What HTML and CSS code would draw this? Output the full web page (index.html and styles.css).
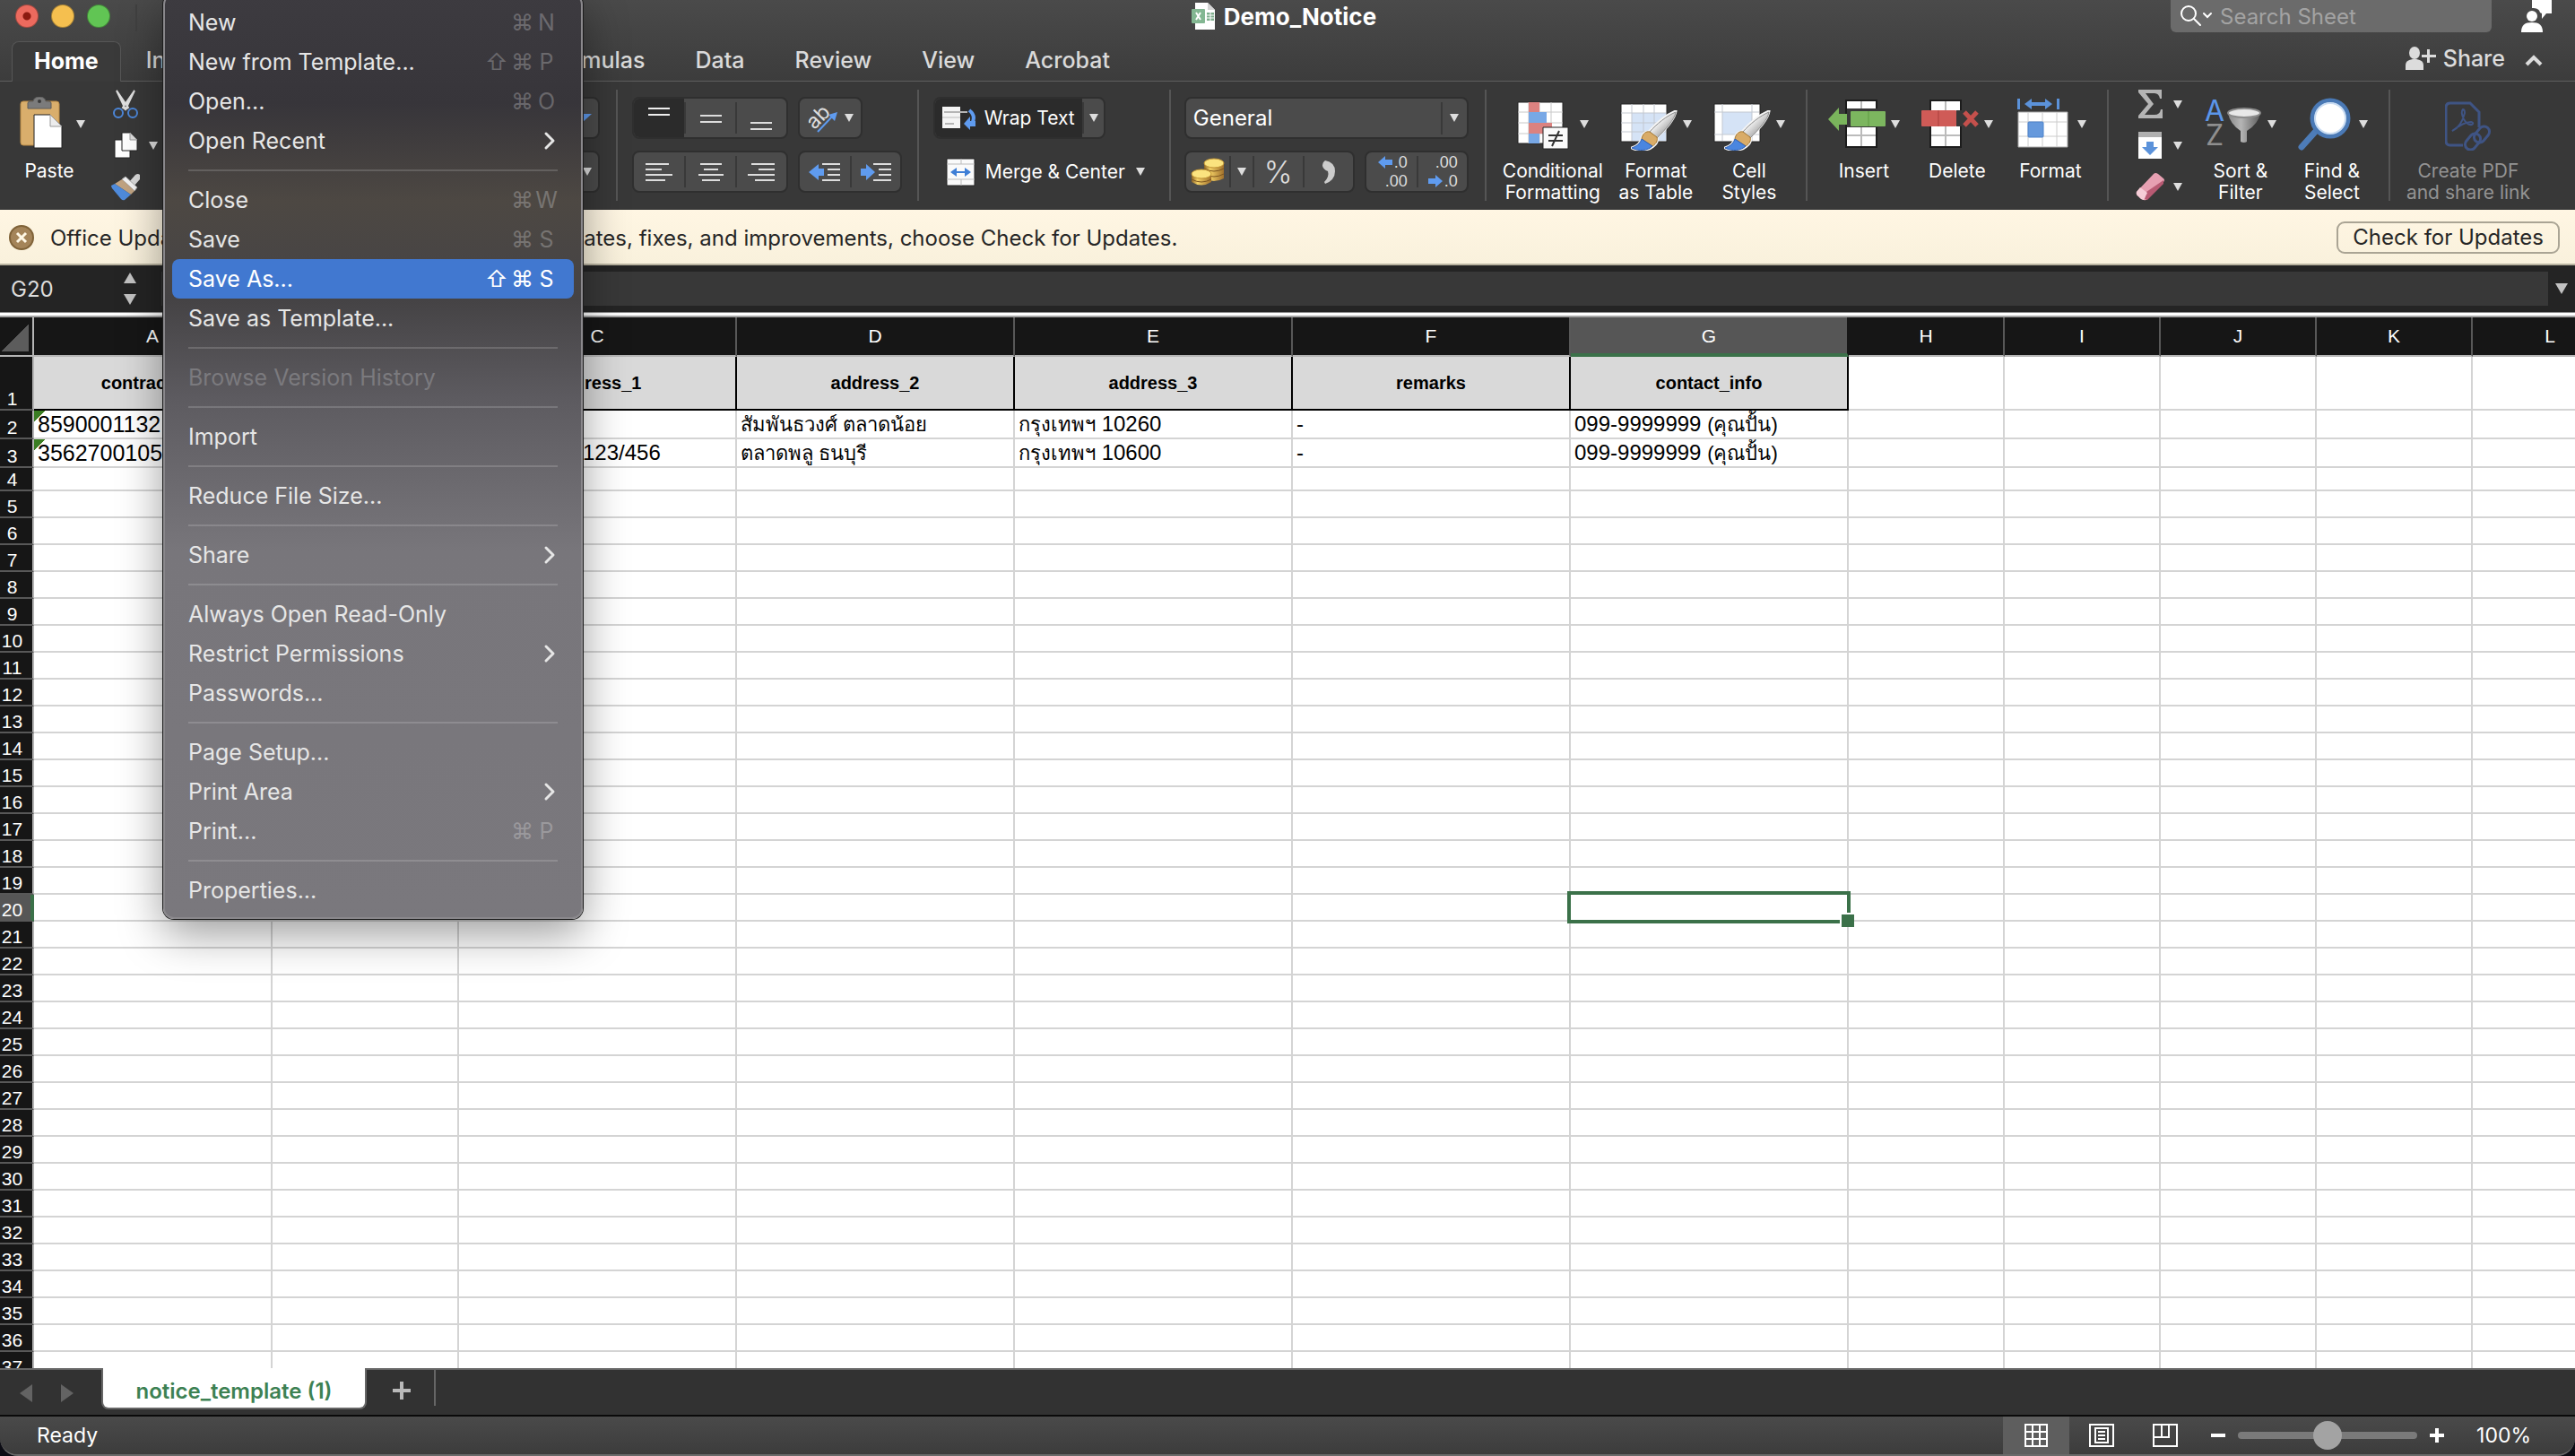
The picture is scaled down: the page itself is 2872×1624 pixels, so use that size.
FILE: index.html
```
<!DOCTYPE html>
<html lang="en">
<head>
    <meta charset="UTF-8">
    <meta name="viewport" content="width=device-width, initial-scale=1.0">
    <title>Demo_Notice</title>
    <link rel="stylesheet" href="styles.css">
</head>
<body>

    <!-- shared icon shapes -->
    <svg class="defs" aria-hidden="true">
        <defs>
            <linearGradient id="steel" x1="0" y1="0" x2="1" y2="1">
                <stop offset="0.3" stop-color="#ffffff"/>
                <stop offset="0.7" stop-color="#a8a8a8"/>
            </linearGradient>
            <linearGradient id="gold" x1="0" y1="0" x2="1" y2="0">
                <stop offset="0" stop-color="#8a6327"/>
                <stop offset="0.3" stop-color="#f3d065"/>
                <stop offset="1" stop-color="#a0702c"/>
            </linearGradient>
            <linearGradient id="funnel" x1="0" y1="0" x2="1" y2="0">
                <stop offset="0" stop-color="#8a8a8a"/>
                <stop offset="0.4" stop-color="#b5b5b5"/>
                <stop offset="1" stop-color="#5e5e5e"/>
            </linearGradient>
            <symbol id="brush" viewBox="0 0 52 46">
                <path d="M50 1C40 5 28 15 20 24c-4 0-7 3-8 7-1 6-5 9-11 11 8 4 18 3 24-2 4-3 5-7 4-10C38 22 49 9 50 1z" fill="#fff" stroke="#f4f4f4" stroke-width="3"/>
                <path d="M50 2C40 6 28 16 21 24l8 7C38 22 49 10 50 2z" fill="url(#steel)" stroke="#8d8d8d"/>
                <path d="M21 24c-4-1-8 2-9 8l12 8c5-3 6-7 5-10z" fill="#d9ac68" stroke="#a67a35"/>
                <path d="M12 32c-2 6-6 8-11 10 8 4 18 3 23-2z" fill="#4a86e0" stroke="#2c5fb5"/>
            </symbol>
            <symbol id="chevron" viewBox="0 0 14 22">
                <path d="M3 3l8 8-8 8" fill="none" stroke="currentColor" stroke-width="3" stroke-linecap="round" stroke-linejoin="round"/>
            </symbol>
        </defs>
    </svg>

    <div class="window">

        <header class="top">
            <div class="titlebar">
                <div class="lights">
                    <button class="light red" aria-label="Close window"></button>
                    <button class="light yellow" aria-label="Minimize"></button>
                    <button class="light green" aria-label="Zoom"></button>
                    <span class="lights-line"></span>
                </div>
                <h1 class="title">
                    <svg width="26" height="30" viewBox="0 0 26 30">
                        <path d="M4 0h14l8 8v22H4z" fill="#fff"/>
                        <path d="M18 0v8h8z" fill="#d5d5d5"/>
                        <path d="M17 11h8v9h-8z" fill="#7fae8d"/>
                        <path d="M17 14h8M17 17h8M21 11v9" stroke="#fff"/>
                        <rect y="7" width="15" height="16" rx="1" fill="#83b792"/>
                        <path d="M5 11l5 8M10 11l-5 8" stroke="#fff" stroke-width="2"/>
                    </svg>
                    Demo_Notice
                </h1>
                <div class="title-right">
                    <label class="search">
                        <svg width="36" height="26" viewBox="0 0 36 26" fill="none" stroke="#fff" stroke-width="2" stroke-linecap="round">
                            <circle cx="10" cy="10" r="8"/>
                            <path d="M16 16l7 7M27 10l4 4 4-4"/>
                        </svg>
                        <input type="text" placeholder="Search Sheet" aria-label="Search Sheet">
                    </label>
                    <svg class="profile" width="36" height="36" viewBox="0 0 36 36" fill="#fff">
                        <ellipse cx="13" cy="18" rx="6" ry="6"/>
                        <path d="M1 36c0-8 4-11 12-11s12 3 12 11z"/>
                        <path d="M13 0h22v15h-6l-5 6v-6l-2-1c-1-4-4-5-9-5z"/>
                    </svg>
                </div>
            </div>
            <div class="tabrow">
                <nav class="tabs">
                    <a href="#" class="tab active">Home</a>
                    <a href="#" class="tab">Insert</a>
                    <a href="#" class="tab">Draw</a>
                    <a href="#" class="tab">Page Layout</a>
                    <a href="#" class="tab">Formulas</a>
                    <a href="#" class="tab">Data</a>
                    <a href="#" class="tab">Review</a>
                    <a href="#" class="tab">View</a>
                    <a href="#" class="tab">Acrobat</a>
                </nav>
                <div class="share">
                    <button class="share-btn">
                        <svg width="34" height="26" viewBox="0 0 34 26" fill="#dcdcdc">
                            <ellipse cx="10" cy="7" rx="6" ry="7"/>
                            <path d="M0 26v-5c0-5 4-7 10-7s10 2 10 7v5z"/>
                            <path d="M24 3h3v6h7v3h-7v6h-3v-6h-6V9h6z"/>
                        </svg>
                        Share
                    </button>
                    <button class="collapse" aria-label="Collapse ribbon">
                        <svg width="20" height="14" viewBox="0 0 20 14"><path d="M2 12l8-8 8 8" fill="none" stroke="#dcdcdc" stroke-width="4"/></svg>
                    </button>
                </div>
            </div>
        </header>

        <section class="ribbon">
            <div class="group clipboard">
                <button class="tool">
                    <span class="pic">
                        <svg width="64" height="60" viewBox="0 0 64 60">
                            <rect x="8" y="5" width="43" height="49" rx="3" fill="#d9ae6c" stroke="#b98a45"/>
                            <path d="M16 13V7q0-2 3-2h3q1-5 7-5t7 5h3q3 0 3 2v6z" fill="#7b7b7b" stroke="#5c5c5c"/>
                            <circle cx="29" cy="5" r="2" fill="#3a3a3a"/>
                            <path d="M23 20h18l13 13v24H23z" fill="#fff" stroke="#222"/>
                            <path d="M41 20v13h13z" fill="#ececec" stroke="#999"/>
                        </svg>
                        <i class="arrow"></i>
                    </span>
                    <span class="label">Paste</span>
                </button>
                <div class="stack">
                    <button aria-label="Cut">
                        <svg width="32" height="32" viewBox="0 0 32 32">
                            <path d="M6 1l13 19-3 2zM26 1L13 20l3 2z" fill="#eee" stroke="#ddd" stroke-width="2"/>
                            <ellipse cx="8" cy="26" rx="5" ry="5" fill="none" stroke="#4c86d8" stroke-width="2"/>
                            <ellipse cx="24" cy="26" rx="5" ry="5" fill="none" stroke="#4c86d8" stroke-width="2"/>
                        </svg>
                    </button>
                    <button aria-label="Copy">
                        <svg width="32" height="32" viewBox="0 0 32 32" fill="#fff" stroke="#222">
                            <path d="M4 10h17v20H4z"/>
                            <path d="M12 2h9l8 8v12H12z"/>
                            <path d="M21 2v8h8z" fill="#ddd" stroke="#999"/>
                        </svg>
                        <i class="arrow"></i>
                    </button>
                    <button aria-label="Format painter">
                        <svg width="32" height="32" viewBox="0 0 32 32">
                            <path d="M20 11l7-8q3-2 5 0t0 5l-7 8z" fill="#d9d9d9"/>
                            <path d="M12 8l4-3 13 12-3 4z" fill="#f3f3f3" stroke="#aaa"/>
                            <path d="M4 13l8-5 14 13-4 4z" fill="#c0a382"/>
                            <path d="M0 15l4-2 18 12-7 6q-2 1-4-1L1 18q-1-2-1-3z" fill="#4f8bdc"/>
                        </svg>
                    </button>
                </div>
            </div>
            <div class="group rows font">
                <div class="row">
                    <div class="seg"><button aria-label="Clear formatting"><svg width="18" height="10" viewBox="0 0 18 10"><path d="M0 0h18L7 10z" fill="#5f9bef"/></svg></button></div>
                </div>
                <div class="row">
                    <div class="seg"><button aria-label="Font color"><i class="arrow"></i></button></div>
                </div>
            </div>
            <span class="divider"></span>
            <div class="group rows align">
                <div class="row">
                    <div class="seg three">
                        <button class="on" aria-label="Top align"><svg width="28" height="26" viewBox="0 0 28 26"><path d="M2 2h24M2 9h24" stroke="#eee" stroke-width="2"/></svg></button>
                        <button aria-label="Middle align"><svg width="28" height="26" viewBox="0 0 28 26"><path d="M2 10h24M2 17h24" stroke="#ddd" stroke-width="2"/></svg></button>
                        <button aria-label="Bottom align"><svg width="28" height="26" viewBox="0 0 28 26"><path d="M2 18h24M2 25h24" stroke="#ddd" stroke-width="2"/></svg></button>
                    </div>
                    <div class="seg">
                        <button class="orient" aria-label="Orientation">
                            <svg width="36" height="36" viewBox="0 0 36 36">
                                <text x="2" y="24" transform="rotate(-45 14 20)" class="ab">ab</text>
                                <path d="M12 33L28 16" stroke="#5f9bef" stroke-width="2"/>
                                <path d="M34 11l-10 3 7 7z" fill="#5f9bef"/>
                            </svg>
                            <i class="arrow"></i>
                        </button>
                    </div>
                </div>
                <div class="row">
                    <div class="seg three">
                        <button aria-label="Align left"><svg width="32" height="24" viewBox="0 0 32 24"><path d="M1 3h26M1 9h18M1 15h30M1 21h22" stroke="#ddd" stroke-width="2"/></svg></button>
                        <button aria-label="Center"><svg width="32" height="24" viewBox="0 0 32 24"><path d="M4 3h24M8 9h16M2 15h28M6 21h20" stroke="#ddd" stroke-width="2"/></svg></button>
                        <button aria-label="Align right"><svg width="32" height="24" viewBox="0 0 32 24"><path d="M5 3h26M13 9h18M1 15h30M9 21h22" stroke="#ddd" stroke-width="2"/></svg></button>
                    </div>
                    <div class="seg two">
                        <button aria-label="Decrease indent"><svg width="36" height="24" viewBox="0 0 36 24"><path d="M0 12L11 3v5h6v8h-6v5z" fill="#5f9bef"/><path d="M15 3h20M21 9h14M21 15h14M15 21h20" stroke="#ddd" stroke-width="2"/></svg></button>
                        <button aria-label="Increase indent"><svg width="36" height="24" viewBox="0 0 36 24"><path d="M17 12L7 3v5H1v8h6v5z" fill="#5f9bef"/><path d="M15 3h20M21 9h14M21 15h14M15 21h20" stroke="#ddd" stroke-width="2"/></svg></button>
                    </div>
                </div>
            </div>
            <span class="divider"></span>
            <div class="group rows wrap">
                <div class="row">
                    <div class="seg">
                        <button class="on labelled">
                            <svg width="40" height="28" viewBox="0 0 40 28">
                                <path d="M0 1h20v24H0z" fill="#f4f4f4"/>
                                <path d="M2 7h26M3 20h10" stroke="#b5b5b5" stroke-width="2"/>
                                <path d="M0 13h20" stroke="#bbb"/>
                                <path d="M30 5q8 6 3 15" fill="none" stroke="#5f9bef" stroke-width="4"/>
                                <path d="M24 20l7-8v5h6v6h-6v4z" fill="#5f9bef"/>
                            </svg>
                            Wrap Text
                        </button>
                        <button class="narrow" aria-label="Wrap options"><i class="arrow"></i></button>
                    </div>
                </div>
                <div class="row">
                    <button class="plain labelled">
                        <svg width="40" height="32" viewBox="0 0 40 32">
                            <path d="M4 1h31v30H4z" fill="#fafafa" stroke="#222"/>
                            <path d="M4 7h31M4 24h31M20 1v6M20 24v7" stroke="#bbb"/>
                            <path d="M8 16l7-5v4h9v-4l7 5-7 5v-4h-9v4z" fill="#3f7fd6"/>
                        </svg>
                        Merge &amp; Center
                        <i class="arrow"></i>
                    </button>
                </div>
            </div>
            <span class="divider"></span>
            <div class="group rows number">
                <div class="row">
                    <div class="seg format">
                        <select aria-label="Number format"><option>General</option></select>
                        <i class="arrow"></i>
                    </div>
                </div>
                <div class="row">
                    <div class="seg">
                        <button class="coins" aria-label="Accounting format">
                            <svg width="40" height="34" viewBox="0 0 40 34">
                                <path d="M16 7v17q11 6 22 0V7z" fill="url(#gold)"/>
                                <path d="M16 13q11 6 22 0M16 19q11 6 22 0" fill="none" stroke="#7b5520"/>
                                <ellipse cx="27" cy="7" rx="11" ry="5" fill="#fbe37f" stroke="#c19435"/>
                                <path d="M2 19v9q11 7 22 0v-9z" fill="url(#gold)"/>
                                <path d="M2 25q11 6 22 0" fill="none" stroke="#7b5520"/>
                                <ellipse cx="13" cy="19" rx="11" ry="5" fill="#fbe37f" stroke="#c19435"/>
                            </svg>
                        </button>
                        <button class="narrow" aria-label="Currency options"><i class="arrow"></i></button>
                        <button class="percent">%</button>
                        <button aria-label="Comma style"><svg width="18" height="28" viewBox="0 0 18 28"><path d="M5 1q11 2 11 12 0 10-11 14l-1-2q6-6 4-12-5-2-6-6 0-4 3-6z" fill="#ccc"/></svg></button>
                    </div>
                    <div class="seg two">
                        <button class="decimal" aria-label="Increase decimal">
                            <span><svg width="16" height="16" viewBox="0 0 16 16"><path d="M0 8l8-7v4h8v6H8v4z" fill="#5f9bef"/></svg>.0</span>
                            <span>.00</span>
                        </button>
                        <button class="decimal" aria-label="Decrease decimal">
                            <span>.00</span>
                            <span><svg width="16" height="16" viewBox="0 0 16 16"><path d="M16 8L8 1v4H0v6h8v4z" fill="#5f9bef"/></svg>.0</span>
                        </button>
                    </div>
                </div>
            </div>
            <span class="divider"></span>
            <div class="group tools">
                <button class="tool wide">
                    <span class="pic">
                        <svg width="64" height="60" viewBox="0 0 64 60">
                            <path d="M1 6h50v46H1z" fill="#fff" stroke="#222"/>
                            <path d="M1 17h50M1 29h50M1 41h50M13 6v46M25 6v46M38 6v46" stroke="#c8c8c8"/>
                            <path d="M13 6h12v11H13zM13 29h26v12H13z" fill="#db8280"/>
                            <path d="M13 17h20v12H13zM13 41h12v11H13z" fill="#78a8e6"/>
                            <path d="M29 34h28v24H29z" fill="#fafafa" stroke="#222"/>
                            <path d="M35 43h16M35 49h16M39 55l8-17" stroke="#333" stroke-width="2"/>
                        </svg>
                        <i class="arrow"></i>
                    </span>
                    <span class="label">Conditional<br>Formatting</span>
                </button>
                <button class="tool">
                    <span class="pic">
                        <svg width="64" height="60" viewBox="0 0 64 60">
                            <path d="M1 8h51v42H1z" fill="#fff" stroke="#222"/>
                            <path d="M13 18h38v31H13z" fill="#d5e3f6"/>
                            <path d="M1 18h50M1 29h50M1 39h50M13 8v41M26 8v41M38 8v41" stroke="#c3c8d0"/>
                            <use href="#brush" x="12" y="15" width="52" height="46"/>
                        </svg>
                        <i class="arrow"></i>
                    </span>
                    <span class="label">Format<br>as Table</span>
                </button>
                <button class="tool">
                    <span class="pic">
                        <svg width="64" height="60" viewBox="0 0 64 60">
                            <path d="M1 8h51v42H1z" fill="#fff" stroke="#222"/>
                            <path d="M10 17h33v25H10z" fill="#d5e3f6"/>
                            <path d="M1 17h50M1 42h50M10 8v41M43 8v41" stroke="#c3c8d0"/>
                            <use href="#brush" x="12" y="15" width="52" height="46"/>
                        </svg>
                        <i class="arrow"></i>
                    </span>
                    <span class="label">Cell<br>Styles</span>
                </button>
            </div>
            <span class="divider"></span>
            <div class="group tools">
                <button class="tool">
                    <span class="pic">
                        <svg width="64" height="60" viewBox="0 0 64 60">
                            <path d="M20 4h34v52H20z" fill="#fff" stroke="#1c1c1c" stroke-width="2"/>
                            <path d="M21 43h32M37 5v50" stroke="#bbb" stroke-width="2"/>
                            <path d="M21 13h43v21H21z" fill="#383838"/>
                            <path d="M0 25L12 12v7h9v12h-9v7z" fill="#7ab45c"/>
                            <rect x="25" y="16" width="39" height="17" rx="1" fill="#7cb65f"/>
                            <path d="M45 16v17" stroke="#5f9a43"/>
                        </svg>
                        <i class="arrow"></i>
                    </span>
                    <span class="label">Insert</span>
                </button>
                <button class="tool">
                    <span class="pic">
                        <svg width="64" height="60" viewBox="0 0 64 60">
                            <path d="M10 4h34v52H10z" fill="#fff" stroke="#1c1c1c" stroke-width="2"/>
                            <path d="M11 43h32M27 5v50" stroke="#bbb" stroke-width="2"/>
                            <rect y="15" width="39" height="18" rx="1" fill="#cf5b57"/>
                            <path d="M19 15v18" stroke="#a93f3c"/>
                            <path d="M39 15h6v18h-6z" fill="#383838"/>
                            <path d="M48 17l14 15M62 17L48 32" stroke="#c4504c" stroke-width="5"/>
                        </svg>
                        <i class="arrow"></i>
                    </span>
                    <span class="label">Delete</span>
                </button>
                <button class="tool">
                    <span class="pic">
                        <svg width="64" height="60" viewBox="0 0 64 60">
                            <path d="M4 17h55v39H4z" fill="#fff" stroke="#aaa"/>
                            <path d="M4 28h55M4 44h55M15 17v39M31 17v39M47 17v39" stroke="#ccc"/>
                            <rect x="15" y="28" width="17" height="17" rx="1" fill="#6699dc" stroke="#4c82ca"/>
                            <path d="M3 2h3v12H3zM47 2h3v12h-3zM11 8l8-6v4h15V2l8 6-8 6v-4H19v4z" fill="#5b92da"/>
                        </svg>
                        <i class="arrow"></i>
                    </span>
                    <span class="label">Format</span>
                </button>
            </div>
            <span class="divider"></span>
            <div class="group">
                <div class="stack">
                    <button aria-label="AutoSum">
                        <svg width="32" height="32" viewBox="0 0 32 32"><path d="M3 0h26v10h-2q-1-6-6-6H11l9 12-10 12h11q6 0 7-6h2v10H3v-3l11-13L3 3z" fill="#b4b4b4"/></svg>
                        <i class="arrow"></i>
                    </button>
                    <button aria-label="Fill">
                        <svg width="32" height="32" viewBox="0 0 32 32">
                            <path d="M3 1h26v30H3z" fill="#fff"/>
                            <path d="M3 1h26v6H3z" fill="#b0b0b0"/>
                            <path d="M12 12h8v6h5l-9 9-9-9h5z" fill="#5b92da"/>
                        </svg>
                        <i class="arrow"></i>
                    </button>
                    <button aria-label="Clear">
                        <svg width="32" height="32" viewBox="0 0 32 32">
                            <path d="M1 22L20 2q2-2 5 0l6 5q2 2 0 4L13 30q-2 2-4 1l-6-4q-3-2-2-5z" fill="#e7a0b2"/>
                            <path d="M31 9v4L13 31l-3-1 2-8z" fill="#b85a73"/>
                            <path d="M1 22l4-5 8 6-4 8q-3 0-6-4-3-2-2-5z" fill="#f6cdd7"/>
                        </svg>
                        <i class="arrow"></i>
                    </button>
                </div>
                <button class="tool">
                    <span class="pic">
                        <svg width="64" height="60" viewBox="0 0 64 60">
                            <text x="0" y="27" class="az blue">A</text>
                            <text x="1" y="54" class="az">Z</text>
                            <path d="M26 18q2 12 14 20v12q4 2 7 0V38q13-8 15-20z" fill="url(#funnel)"/>
                            <ellipse cx="44" cy="18" rx="18" ry="5" fill="#e8e8e8" stroke="#8c8c8c" stroke-width="2"/>
                        </svg>
                        <i class="arrow"></i>
                    </span>
                    <span class="label">Sort &amp;<br>Filter</span>
                </button>
                <button class="tool">
                    <span class="pic">
                        <svg width="64" height="60" viewBox="0 0 64 60">
                            <path d="M6 56l17-19" stroke="#4d7cb8" stroke-width="7" stroke-linecap="round"/>
                            <circle cx="38" cy="24" r="20" fill="#fff" stroke="#4a79b5" stroke-width="5"/>
                            <circle cx="38" cy="24" r="17" fill="none" stroke="#c9dcf2" stroke-width="2"/>
                        </svg>
                        <i class="arrow"></i>
                    </span>
                    <span class="label">Find &amp;<br>Select</span>
                </button>
            </div>
            <span class="divider"></span>
            <div class="group last">
                <button class="tool" disabled>
                    <span class="pic">
                        <svg width="52" height="60" viewBox="0 0 52 60" fill="none" stroke="#3f5484" stroke-width="3">
                            <path d="M20 54H6q-5 0-5-5V12q0-5 5-5h22l10 10v17"/>
                            <path d="M8 38q10-4 14-20 0-4-2-4-3 3 1 11 4 7 9 6 3-2-1-3-8 0-21 10z" stroke-width="2"/>
                            <rect x="-6" y="-10" width="12" height="20" rx="6" transform="translate(41 42) rotate(40)"/>
                            <rect x="-6" y="-10" width="12" height="20" rx="6" transform="translate(31 50) rotate(40)"/>
                        </svg>
                    </span>
                    <span class="label">Create PDF<br>and share link</span>
                </button>
            </div>
        </section>

        <section class="message">
            <button class="message-close" aria-label="Dismiss">
                <svg width="28" height="28" viewBox="0 0 28 28">
                    <circle cx="14" cy="14" r="13" fill="#a48459" stroke="#7f6238" stroke-width="2"/>
                    <path d="M9 9l10 10M19 9L9 19" stroke="#fff8e6" stroke-width="3"/>
                </svg>
            </button>
            <p class="message-text"><span>Office Update</span> <span>To keep up-to-date with security updates, fixes, and improvements, choose Check for Updates.</span></p>
            <button class="check">Check for Updates</button>
        </section>

        <section class="formula">
            <input class="namebox" type="text" value="G20" aria-label="Name box">
            <span class="spin"><i class="up"></i><i class="down"></i></span>
            <input class="fx" type="text" aria-label="Formula">
            <button class="expand" aria-label="Expand formula bar"><i class="down"></i></button>
        </section>

        <main class="sheet">
            <table id="grid"></table>
        </main>

        <footer>
            <div class="sheetbar">
                <button class="nav-arrow prev" aria-label="Previous sheet"></button>
                <button class="nav-arrow next" aria-label="Next sheet"></button>
                <button class="sheet-tab">notice_template (1)</button>
                <button class="add" aria-label="Add sheet">
                    <svg width="22" height="22" viewBox="0 0 22 22"><path d="M11 1v20M1 11h20" stroke="#b9b9b9" stroke-width="4"/></svg>
                </button>
            </div>
            <div class="status">
                <span class="ready">Ready</span>
                <button class="view on" aria-label="Normal view">
                    <svg width="28" height="28" viewBox="0 0 28 28" fill="none" stroke="#fff" stroke-width="2"><path d="M2 2h24v24H2zM2 10h24M2 18h24M10 2v24M18 2v24"/></svg>
                </button>
                <button class="view" aria-label="Page layout view">
                    <svg width="28" height="28" viewBox="0 0 28 28" fill="none" stroke="#fff" stroke-width="2"><path d="M1 2h26v24H1zM7 6h14v16H7zM10 10h8M10 14h8M10 18h8"/></svg>
                </button>
                <button class="view" aria-label="Page break view">
                    <svg width="28" height="28" viewBox="0 0 28 28" fill="none" stroke="#fff" stroke-width="2"><path d="M1 2h26v24H1zM1 16h17V2M10 2v14"/></svg>
                </button>
                <div class="zoom">
                    <button aria-label="Zoom out"><svg width="16" height="16" viewBox="0 0 16 16"><path d="M0 8h16" stroke="#fff" stroke-width="4"/></svg></button>
                    <input type="range" min="0" max="100" value="50" aria-label="Zoom">
                    <button aria-label="Zoom in"><svg width="16" height="16" viewBox="0 0 16 16"><path d="M0 8h16M8 0v16" stroke="#fff" stroke-width="4"/></svg></button>
                </div>
                <span>100%</span>
            </div>
        </footer>

        <!-- File menu, open over the sheet -->
        <div class="menu" role="menu">
            <button role="menuitem">New <kbd><span></span><span>⌘</span><span>N</span></kbd></button>
            <button role="menuitem">New from Template... <kbd><span>⇧</span><span>⌘</span><span>P</span></kbd></button>
            <button role="menuitem">Open... <kbd><span></span><span>⌘</span><span>O</span></kbd></button>
            <button role="menuitem">Open Recent <svg class="more"><use href="#chevron"/></svg></button>
            <hr>
            <button role="menuitem">Close <kbd><span></span><span>⌘</span><span>W</span></kbd></button>
            <button role="menuitem">Save <kbd><span></span><span>⌘</span><span>S</span></kbd></button>
            <button role="menuitem" class="selected">Save As... <kbd><span>⇧</span><span>⌘</span><span>S</span></kbd></button>
            <button role="menuitem">Save as Template...</button>
            <hr>
            <button role="menuitem" disabled>Browse Version History</button>
            <hr>
            <button role="menuitem">Import</button>
            <hr>
            <button role="menuitem">Reduce File Size...</button>
            <hr>
            <button role="menuitem">Share <svg class="more"><use href="#chevron"/></svg></button>
            <hr>
            <button role="menuitem">Always Open Read-Only</button>
            <button role="menuitem">Restrict Permissions <svg class="more"><use href="#chevron"/></svg></button>
            <button role="menuitem">Passwords...</button>
            <hr>
            <button role="menuitem">Page Setup...</button>
            <button role="menuitem">Print Area <svg class="more"><use href="#chevron"/></svg></button>
            <button role="menuitem">Print... <kbd><span></span><span>⌘</span><span>P</span></kbd></button>
            <hr>
            <button role="menuitem">Properties...</button>
        </div>
    </div>

    <script>
        const columns = 'ABCDEFGHIJKL'.split('');
        const rowCount = 37;

        const data = {
            1: { A: 'contract_no', B: 'name', C: 'address_1', D: 'address_2', E: 'address_3', F: 'remarks', G: 'contact_info' },
            2: {
                A: '8590001132',
                D: '<span lang="th">สัมพันธวงศ์ ตลาดน้อย</span>',
                E: '<span lang="th">กรุงเทพฯ</span> 10260',
                F: '-',
                G: '099-9999999 <span lang="th">(คุณปั้น)</span>'
            },
            3: {
                A: '3562700105',
                C: '<span class="pushed">123/456</span>',
                D: '<span lang="th">ตลาดพลู ธนบุรี</span>',
                E: '<span lang="th">กรุงเทพฯ</span> 10600',
                F: '-',
                G: '099-9999999 <span lang="th">(คุณปั้น)</span>'
            }
        };

        // Column widths
        let html = '<colgroup><col class="c-num">';
        columns.forEach(c => {
            const size = c === 'A' ? 'c-a' : c === 'B' ? 'c-b' : c > 'G' ? 'c-default' : 'c-wide';
            html += `<col class="${size}">`;
        });
        html += '</colgroup><thead><tr><th class="corner"></th>';
        columns.forEach(c => {
            html += `<th scope="col"${c === 'G' ? ' class="current"' : ''}>${c}</th>`;
        });
        html += '</tr></thead><tbody>';

        // Rows
        for (let r = 1; r <= rowCount; r++) {
            html += `<tr class="r${r}"><th scope="row"${r === 20 ? ' class="current"' : ''}>${r}</th>`;
            columns.forEach(c => {
                const value = (data[r] && data[r][c]) || '';
                let cls = '';
                if (r === 1 && value) cls = 'head';
                if (c === 'A' && (r === 2 || r === 3)) cls = 'warn';
                if (c === 'G' && r === 20) cls = 'cursor';
                html += `<td${cls ? ` class="${cls}"` : ''}>${value}</td>`;
            });
            html += '</tr>';
        }
        document.getElementById('grid').innerHTML = html + '</tbody>';
    </script>

</body>
</html>
```
FILE: styles.css
```
* {
    margin: 0;
    padding: 0;
    box-sizing: border-box;
}

body {
    font-family: Inter, "Open Sans", sans-serif;
    background: #0c0c14;
    color: #fff;
    height: 100vh;
    overflow: hidden;
}

button, input, select {
    font: inherit;
    color: inherit;
    background: none;
    border: none;
    outline: none;
}

.defs {
    position: absolute;
    width: 0;
    height: 0;
}

.window {
    position: relative;
    display: flex;
    flex-direction: column;
    height: 100vh;
    overflow: hidden;
    border-bottom: 2px solid #6a6a6a;
    border-radius: 0 0 20px 20px;
    background: #383838;
}

/* Title bar and tabs */
.top {
    background: linear-gradient(#4a4a4a, #3c3c3c);
}

.titlebar {
    display: grid;
    grid-template-columns: 1fr auto 1fr;
    height: 46px;
}

.lights {
    display: flex;
    gap: 14px;
    padding: 5px 0 0 17px;
}

.light {
    width: 26px;
    height: 26px;
    border-radius: 50%;
    border: 1px solid rgba(0, 0, 0, 0.3);
}

.red {
    background: radial-gradient(circle, #8c1a10 4px, #ec6a5e 5px);
}

.yellow {
    background: #f5bf4f;
}

.green {
    background: #61c554;
}

.lights-line {
    width: 2px;
    height: 30px;
    margin-left: 14px;
    background: #404040;
}

.title {
    display: flex;
    align-items: center;
    gap: 10px;
    height: 36px;
    padding-right: 8px;
    font-size: 26px;
    font-weight: 700;
}

.title-right {
    display: flex;
    justify-content: flex-end;
    gap: 32px;
    padding-right: 25px;
}

.search {
    display: flex;
    align-items: center;
    gap: 9px;
    width: 358px;
    height: 36px;
    padding-left: 10px;
    border-radius: 0 0 6px 6px;
    background: #6b6b6b;
    font-size: 24px;
}

.search input {
    flex: 1;
    min-width: 0;
}

.search input::placeholder {
    color: #a3a3a3;
}

.tabrow {
    display: flex;
    justify-content: space-between;
    height: 45px;
    padding-left: 13px;
    border-bottom: 1px solid #5e5e5e;
}

.tabs {
    display: flex;
}

.tab {
    height: 45px;
    padding: 0 28px;
    font-size: 25px;
    font-weight: 500;
    line-height: 42px;
    color: #dadada;
    text-decoration: none;
}

.tab.active {
    padding: 0 24px;
    border: 1px solid #565656;
    border-bottom: none;
    border-radius: 8px 8px 0 0;
    background: #3a3a3a;
    color: #fff;
    font-weight: 700;
}

.share {
    display: flex;
    gap: 22px;
    height: 38px;
    padding-right: 36px;
    font-size: 25px;
    font-weight: 500;
    color: #dcdcdc;
}

.share-btn {
    display: flex;
    align-items: center;
    gap: 8px;
}

/* Ribbon */
.ribbon {
    display: flex;
    height: 143px;
    background: #383838;
}

.divider {
    flex: none;
    width: 2px;
    margin: 9px 0 10px;
    background: #555;
}

.group {
    display: flex;
    flex: none;
    gap: 12px;
    padding: 0 18px;
}

.tools {
    gap: 14px;
}

.last {
    padding-right: 50px;
}

.clipboard {
    padding-left: 10px;
}

.tool {
    display: flex;
    flex-direction: column;
    align-items: center;
    min-width: 90px;
    padding-top: 17px;
    font-size: 21px;
}

.wide {
    min-width: 112px;
}

.tool:disabled .label {
    color: #939393;
}

.pic {
    display: flex;
    align-items: center;
    gap: 6px;
    height: 60px;
}

.label {
    margin-top: 11px;
    line-height: 24px;
    white-space: nowrap;
}

.arrow {
    flex: none;
    border: solid transparent;
    border-width: 9px 5px 0;
    border-top-color: #dedede;
}

.stack {
    display: flex;
    flex-direction: column;
    width: 72px;
    padding: 2px 0 0 12px;
}

.stack button {
    display: flex;
    align-items: center;
    gap: 10px;
    height: 46px;
}

.az {
    font: 32px Inter, sans-serif;
    fill: #8f8f8f;
}

.az.blue {
    fill: #5b96ea;
}

.rows {
    flex-direction: column;
    gap: 13px;
    padding-top: 17px;
}

.row {
    display: flex;
    gap: 11px;
    height: 47px;
}

.font {
    flex: 1 0 0;
    align-items: flex-end;
}

.align {
    padding-left: 16px;
    padding-right: 17px;
}

.wrap {
    padding-left: 16px;
    padding-right: 27px;
}

.number {
    padding-left: 15px;
}

.seg {
    display: flex;
    border: 2px solid #2f2f2f;
    border-radius: 8px;
    background: #4b4b4b;
    overflow: hidden;
}

.seg button {
    display: flex;
    align-items: center;
    justify-content: center;
    width: 58px;
}

.seg button + button {
    margin: 4px 0;
    border-left: 2px solid #393939;
}

.font .seg button {
    justify-content: flex-end;
    padding-right: 7px;
}

.seg.three {
    width: 174px;
}

.seg.two {
    width: 116px;
}

.seg .on {
    background: #2b2b2b;
}

.seg .orient {
    gap: 6px;
    width: 68px;
}

.ab {
    font: 23px Inter, sans-serif;
    fill: #ddd;
}

.seg .labelled {
    width: 164px;
}

.labelled {
    display: flex;
    align-items: center;
    gap: 7px;
    font-size: 21px;
    white-space: nowrap;
}

.plain {
    padding-left: 11px;
}

.plain .arrow {
    margin-left: 5px;
}

.seg .narrow {
    width: 24px;
}

.number .seg button {
    width: 56px;
}

.number .seg .narrow {
    width: 26px;
}

.number .seg .coins {
    width: 48px;
}

.seg .percent {
    font-size: 34px;
    font-weight: 300;
    color: #ddd;
}

.format {
    flex: 1;
    align-items: center;
    padding-right: 9px;
    font-size: 24px;
}

.format select {
    flex: 1;
    height: 36px;
    margin-right: 8px;
    padding-left: 8px;
    border-right: 2px solid #393939;
    appearance: none;
}

.seg .decimal {
    flex-direction: column;
    align-items: flex-end;
    padding-right: 10px;
    font-family: "Liberation Sans", Arial, sans-serif;
    font-size: 18px;
    line-height: 21px;
    color: #ddd;
}

.decimal span {
    display: flex;
    align-items: center;
    gap: 2px;
}

/* Update message */
.message {
    display: flex;
    align-items: center;
    height: 62px;
    padding: 2px 17px 0 10px;
    border-bottom: 2px solid #b9b3a0;
    background: linear-gradient(#fff6e3, #f9f1dc);
    color: #262626;
    font-size: 24px;
}

.message-close {
    display: flex;
}

.message-text {
    display: flex;
    flex: 1;
    gap: 15px;
    padding-left: 18px;
    white-space: nowrap;
}

.check {
    height: 36px;
    padding: 0 16px;
    border: 2px solid #aaa494;
    border-radius: 9px;
    line-height: 32px;
}

/* Formula bar */
.formula {
    display: flex;
    align-items: center;
    height: 58px;
    padding-bottom: 6px;
    background: linear-gradient(#242424 52px, #8c8c8c 52px, #8c8c8c 53px, #fff 53px, #fff 56px, #a5a5a5 56px);
}

.namebox {
    width: 126px;
    padding-left: 12px;
    font-size: 24px;
    color: #dcdcdc;
}

.spin {
    display: flex;
    flex-direction: column;
    gap: 12px;
    width: 54px;
    padding-left: 12px;
}

.up, .down {
    width: 14px;
    border: solid transparent;
    border-width: 0 7px 12px;
    border-bottom-color: #c2c2c2;
}

.down {
    display: block;
    border-width: 12px 7px 0;
    border-top-color: #c2c2c2;
}

.fx {
    flex: 1;
    height: 38px;
    background: #383838;
}

.expand {
    padding: 0 8px;
}

/* Grid */
.sheet {
    flex: 1;
    min-height: 0;
    overflow: hidden;
    background: #fff;
    color: #000;
    font-family: "Liberation Sans", Arial, sans-serif;
}

table {
    width: max-content;
    table-layout: fixed;
    border-collapse: separate;
    border-spacing: 0;
}

.c-num { width: 38px; }
.c-a { width: 266px; }
.c-b { width: 208px; }
.c-wide { width: 310px; }
.c-default { width: 174px; }

th {
    border: solid #585858;
    border-width: 0 2px 2px 0;
    background: #161616;
    color: #fff;
    font-size: 21px;
    font-weight: 400;
    line-height: 22px;
}

thead th {
    height: 44px;
    border-bottom-color: #b5b5b5;
}

thead .corner {
    border-right-color: #b5b5b5;
    background: linear-gradient(135deg, #161616 50%, #5c5c5c 50%) no-repeat 2px 8px / 30px 30px #161616;
}

thead .current {
    border-bottom: 4px solid #3b7149;
    border-right-color: #161616;
    background: #565656;
    padding-top: 2px;
}

tbody th {
    height: 30px;
    padding-right: 9px;
    border-right-color: #b5b5b5;
    vertical-align: bottom;
}

tbody .current {
    padding-right: 7px;
    border-right: 4px solid #3b7149;
    background: #565656;
}

td {
    padding: 0 4px;
    border: solid #d4d4d4;
    border-width: 0 2px 2px 0;
    font-size: 24px;
    line-height: 26px;
    white-space: nowrap;
}

.r1 th { height: 60px; }
.r2 th, .r3 th { height: 32px; }
.r4 th { height: 26px; }

.r4 td {
    line-height: 20px;
}

.head {
    border-color: #000;
    background: #d9d9d9;
    font-size: 20px;
    font-weight: 700;
    text-align: center;
}

.warn {
    background: linear-gradient(135deg, #3a7d22 9px, transparent 9px);
    font-size: 25px;
}

td [lang="th"] {
    font-size: 22px;
}

.pushed {
    padding-left: 134px;
}

/* cursor frame sits over the neighbouring grid lines */
.cursor {
    position: relative;
}

.cursor::before {
    content: "";
    position: absolute;
    inset: -4px;
    border: 4px solid #3b7149;
}

.cursor::after {
    content: "";
    position: absolute;
    right: -8px;
    bottom: -8px;
    width: 14px;
    height: 14px;
    border: solid #fff;
    border-width: 2px 0 0 2px;
    background: #3b7149;
}

/* Sheet tabs */
.sheetbar {
    display: flex;
    height: 52px;
    border-top: 2px solid #666;
    background: #323232;
}

.nav-arrow {
    height: 20px;
    margin-top: 16px;
    border: solid transparent;
}

.prev {
    margin-left: 22px;
    border-width: 10px 14px 10px 0;
    border-right-color: #636363;
}

.next {
    margin-left: 32px;
    border-width: 10px 0 10px 14px;
    border-left-color: #636363;
}

.sheet-tab {
    width: 296px;
    height: 46px;
    margin: -2px 0 0 31px;
    padding-top: 6px;
    border: 2px solid #666;
    border-top: none;
    border-radius: 0 0 8px 8px;
    background: #fff;
    color: #3d8153;
    font-size: 24px;
    font-weight: 600;
}

.add {
    width: 77px;
    height: 40px;
    padding: 10px 0 0 2px;
    border-right: 2px solid #666;
}

/* Status bar */
.status {
    display: flex;
    align-items: center;
    height: 44px;
    padding: 0 49px 0 41px;
    border-top: 2px solid #0a0a0a;
    background: linear-gradient(#4a4a4a, #3c3c3c);
    font-size: 23px;
}

.ready {
    flex: 1;
}

.view {
    display: flex;
    align-items: center;
    justify-content: center;
    width: 71px;
    height: 42px;
}

.view.on {
    width: 74px;
    background: #5e5e5e;
}

.zoom {
    display: flex;
    align-items: center;
    gap: 14px;
    margin: 0 36px 0 16px;
}

.zoom button {
    display: flex;
}

.zoom input {
    width: 200px;
    height: 32px;
    appearance: none;
}

.zoom input::-webkit-slider-runnable-track {
    height: 8px;
    border-radius: 4px;
    background: #7a7a7a;
}

.zoom input::-webkit-slider-thumb {
    appearance: none;
    width: 32px;
    height: 32px;
    margin-top: -12px;
    border-radius: 50%;
    background: #a3a3a3;
}

/* File menu */
.menu {
    position: absolute;
    top: -7px;
    left: 182px;
    display: flex;
    flex-direction: column;
    width: 468px;
    padding: 8px;
    border: 2px solid #8a888c;
    border-radius: 12px;
    background: linear-gradient(#3d3b40, #37353a 120px, #4d4843 230px, #454345 340px, #5d5b60 450px, #78767b 620px, #7a787d);
    box-shadow: 0 0 0 1px #1c1c1c, 0 16px 50px rgba(0, 0, 0, 0.4);
}

.menu button {
    display: flex;
    align-items: center;
    justify-content: space-between;
    height: 44px;
    padding: 0 18px;
    border-radius: 8px;
    font-size: 25px;
    color: #e6e6e6;
}

.menu button.selected {
    background: #4178d0;
    color: #fff;
}

.menu button:disabled {
    color: #7b7a7e;
}

.menu kbd {
    display: grid;
    grid-template-columns: 28px 29px 25px;
    font-family: Inter, "DejaVu Sans", sans-serif;
    color: rgba(255, 255, 255, 0.25);
}

.menu .selected kbd {
    color: #fff;
}

.menu hr {
    height: 2px;
    margin: 10px 18px;
    border: none;
    background: rgba(255, 255, 255, 0.16);
}

.more {
    width: 14px;
    height: 28px;
    margin-right: 2px;
}
```
